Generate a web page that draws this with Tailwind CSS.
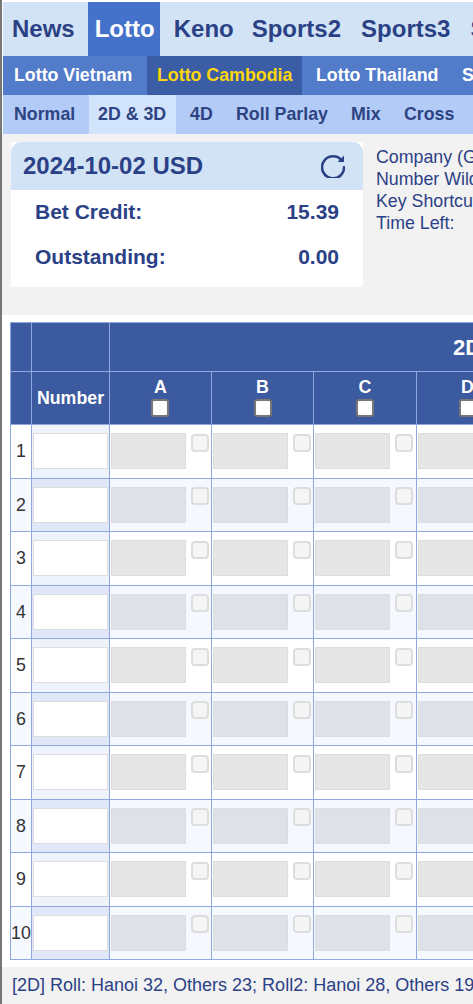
<!DOCTYPE html>
<html lang="en">
<head>
<meta charset="utf-8">
<title>Lotto</title>
<script src="https://cdn.jsdelivr.net/npm/@tailwindcss/browser@4"></script>
</head>
<body class="bg-[#f2f2f2]">
<div class="w-[473px] h-[1004px] overflow-hidden border-l-2 border-[#777] font-['Liberation_Sans',Arial,sans-serif] text-[#2b4186] bg-[#f2f2f2]">
    <!-- top nav -->
    <div class="bg-white pt-[2px] pl-px">
        <div class="flex h-[54px] w-[600px] items-center bg-[#d2e3f5] text-[24px] font-bold text-[#2b4186]">
            <a class="pl-[9px] pr-[13px] h-full flex items-center">News</a>
            <a class="w-[72px] pl-[7px] h-full flex items-center bg-[#4472ca] text-white">Lotto</a>
            <a class="pl-[14px] pr-[8px] h-full flex items-center">Keno</a>
            <a class="px-[10px] h-full flex items-center">Sports2</a>
            <a class="px-[10px] h-full flex items-center">Sports3</a>
            <a class="px-[10px] h-full flex items-center">Sports</a>
        </div>
        <div class="flex h-[39px] w-[600px] bg-[#527bc9] text-[17.8px] font-bold text-white">
            <a class="w-[144px] pl-[11px] flex items-center">Lotto Vietnam</a>
            <a class="w-[155px] pl-[10px] flex items-center bg-[#3b5da5] text-[#ffd60a]">Lotto Cambodia</a>
            <a class="w-[160px] pl-[14px] flex items-center">Lotto Thailand</a>
            <a class="flex items-center">Sports</a>
        </div>
        <div class="flex h-[39px] w-[600px] bg-[#b3ccf7] text-[17.8px] font-bold text-[#2e4482]">
            <a class="w-[86px] pl-[11px] flex items-center">Normal</a>
            <a class="w-[87px] pl-[9px] flex items-center bg-[#d2e3fc]">2D &amp; 3D</a>
            <a class="w-[60px] pl-[14px] flex items-center">4D</a>
            <a class="w-[115px] flex items-center">Roll Parlay</a>
            <a class="w-[53px] flex items-center">Mix</a>
            <a class="flex items-center">Cross</a>
        </div>
    </div>

    <!-- summary -->
    <div class="flex h-[181px] pt-2 pl-[9px]">
        <div class="w-[352px] h-[145px] flex-none bg-white">
            <div class="flex h-[48px] items-center justify-between pl-3 pr-[18px] bg-[#d2e3f5] rounded-t-[10px] text-[24px] font-bold">
                <span>2024-10-02 USD</span>
                <svg class="w-[24px] h-[24px]" viewBox="0 0 24 24" fill="none" stroke="#2b4186" stroke-width="2.6">
                    <path d="M20.5 6.2A11 11 0 1 0 23 12"/>
                    <path d="M23 1.5V8h-6.5z" fill="#2b4186" stroke="none"/>
                </svg>
            </div>
            <div class="flex justify-between items-center h-[44px] pl-6 pr-6 text-[21px] font-bold">
                <span>Bet Credit:</span><span>15.39</span>
            </div>
            <div class="flex justify-between items-center h-[46px] pl-6 pr-6 text-[21px] font-bold">
                <span>Outstanding:</span><span>0.00</span>
            </div>
        </div>
        <div class="flex-none ml-[13px] mt-[4px] text-[17.8px] leading-[22px]">
            <p>Company (GMT+7)</p>
            <p>Number Wildcard</p>
            <p>Key Shortcuts</p>
            <p>Time Left:</p>
        </div>
    </div>

    <!-- bet table -->
    <div class="bg-white h-[652px] pt-[7px] pl-2">
        <table class="table-fixed w-[814px] border-collapse text-[17.8px]">
            <colgroup>
                <col class="w-[21px]"><col class="w-[78px]"><col class="w-[102px]"><col class="w-[102px]"><col class="w-[103px]"><col class="w-[102px]"><col class="w-[102px]"><col class="w-[102px]"><col class="w-[102px]">
            </colgroup>
            <thead class="bg-[#3b5a9f] text-white font-bold">
                <tr class="h-[49px]">
                    <th class="border border-[#8fa9e0]"></th>
                    <th class="border border-[#8fa9e0]"></th>
                    <th colspan="7" class="border border-[#8fa9e0] text-[22px] font-bold">2D</th>
                </tr>
                <tr class="h-[53px]">
                    <th class="border border-[#8fa9e0]"></th>
                    <th class="border border-[#8fa9e0] font-bold">Number</th>
                    <th class="border border-[#8fa9e0] font-bold"><div class="leading-[18px] -mt-[1px] mb-[3px]">A</div><input type="checkbox" class="block ml-[41px] w-[18px] h-[18px] appearance-none bg-white border-2 border-[#777] rounded-[3px]"></th>
                    <th class="border border-[#8fa9e0] font-bold"><div class="leading-[18px] -mt-[1px] mb-[3px]">B</div><input type="checkbox" class="block mx-auto w-[18px] h-[18px] appearance-none bg-white border-2 border-[#777] rounded-[3px]"></th>
                    <th class="border border-[#8fa9e0] font-bold"><div class="leading-[18px] -mt-[1px] mb-[3px]">C</div><input type="checkbox" class="block mx-auto w-[18px] h-[18px] appearance-none bg-white border-2 border-[#777] rounded-[3px]"></th>
                    <th class="border border-[#8fa9e0] font-bold"><div class="leading-[18px] -mt-[1px] mb-[3px]">D</div><input type="checkbox" class="block mx-auto w-[18px] h-[18px] appearance-none bg-white border-2 border-[#777] rounded-[3px]"></th>
                    <th class="border border-[#8fa9e0] font-bold"><div class="leading-[18px] -mt-[1px] mb-[3px]">E</div><input type="checkbox" class="block mx-auto w-[18px] h-[18px] appearance-none bg-white border-2 border-[#777] rounded-[3px]"></th>
                    <th class="border border-[#8fa9e0] font-bold"><div class="leading-[18px] -mt-[1px] mb-[3px]">F</div><input type="checkbox" class="block mx-auto w-[18px] h-[18px] appearance-none bg-white border-2 border-[#777] rounded-[3px]"></th>
                    <th class="border border-[#8fa9e0] font-bold"><div class="leading-[18px] -mt-[1px] mb-[3px]">G</div><input type="checkbox" class="block mx-auto w-[18px] h-[18px] appearance-none bg-white border-2 border-[#777] rounded-[3px]"></th>
                </tr>
            </thead>
            <tbody id="rows"></tbody>
        </table>
    </div>

    <!-- footer note -->
    <div class="h-[37px] pl-[10px] flex items-center whitespace-nowrap text-[18px]">[2D] Roll: Hanoi 32, Others 23; Roll2: Hanoi 28, Others 19</div>
</div>
<script>
    var rows = document.getElementById("rows");
    for (var i = 1; i <= 10; i++) {
        var odd = i % 2 == 1;
        var tr = document.createElement("tr");
        tr.className = odd ? "h-[54px] bg-white" : "h-[53px] bg-[#f5f8ff]";
        var html = '<td class="border border-[#8fa9e0] text-center text-[#333] p-0">' + i + '</td>';
        html += '<td class="border border-[#8fa9e0] align-top pt-2 pl-px ' + (odd ? 'bg-[#eef2fb]' : 'bg-[#e0e7f8]') + '"><input type="text" class="block w-[75px] h-[36px] bg-white border border-[#ddd]"></td>';
        for (var c = 0; c < 7; c++) {
            html += '<td class="border border-[#8fa9e0] align-top pt-2 pl-px"><div class="flex"><input type="text" disabled class="block w-[75px] h-[36px] border border-[#ddd] ' + (odd ? 'bg-[#e6e6e6]' : 'bg-[#dfe1e8] border-[#d8dae2]') + '"><input type="checkbox" disabled class="block ml-[5px] ' + (odd ? 'mt-px' : 'mt-0') + ' w-[18px] h-[18px] appearance-none bg-[#f5f5f5] border-2 border-[#ddd] rounded-[4px]"></div></td>';
        }
        tr.innerHTML = html;
        rows.appendChild(tr);
    }
</script>
</body>
</html>
